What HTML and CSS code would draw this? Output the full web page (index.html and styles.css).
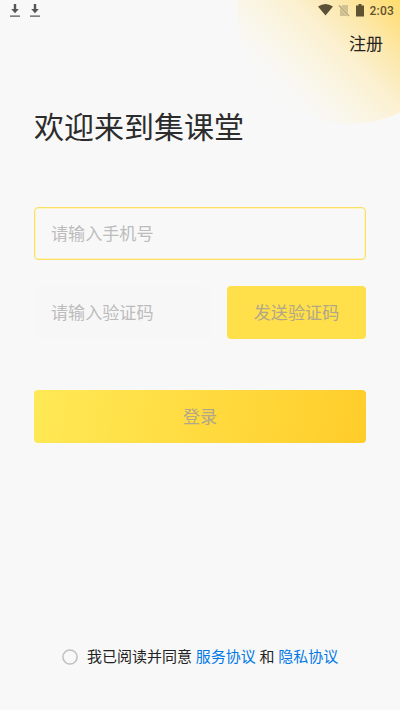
FILE: index.html
```html
<!DOCTYPE html>
<html lang="zh-CN">
<head>
<meta charset="utf-8">
<title>登录</title>
<link rel="stylesheet" href="styles.css">
</head>
<body>
<div class="screen">
  <div class="glow"></div>
  <header class="status">
    <svg class="download" viewBox="0 0 10 14"><path d="M3.8 0h2.4v5h2.6L5 9.3 1.2 5h2.6zM0 11.5h10v1.3H0z"/></svg>
    <svg class="download" viewBox="0 0 10 14"><path d="M3.8 0h2.4v5h2.6L5 9.3 1.2 5h2.6zM0 11.5h10v1.3H0z"/></svg>
    <div class="system">
      <svg class="wifi" viewBox="0 0 15 12"><path d="M0 2.600Q7.500-2.400 15 2.600L7.500 11.600z"/></svg>
      <svg class="sim" viewBox="0 0 12 13"><path d="M4.500 1H10v8.500L3.300 2.600zM2 4l7.500 8H2z"/><path class="slash" d="M1 1.500L11 12"/></svg>
      <svg class="battery" viewBox="0 0 8 13"><path d="M2.500 0h3v1.500H8V12.500H0V1.500h2.500z"/></svg>
      <span class="time">2:03</span>
    </div>
  </header>
  <nav class="nav"><a class="register">注册</a></nav>
  <h1 class="title">欢迎来到集课堂</h1>
  <form class="form">
    <div class="field active">请输入手机号</div>
    <div class="row">
      <div class="field code">请输入验证码</div>
      <div class="send">发送验证码</div>
    </div>
    <div class="login">登录</div>
  </form>
  <footer class="agreement">
    <svg class="radio" viewBox="0 0 16 16"><circle cx="8" cy="8" r="7.100"/></svg>
    <span>我已阅读并同意 <a>服务协议</a> 和 <a>隐私协议</a></span>
  </footer>
</div>
</body>
</html>
```
FILE: styles.css
```css
* { box-sizing: border-box; }
body {
  margin: 0;
  background: #f8f8f8;
  font-family: Roboto, "Noto Sans CJK SC", sans-serif;
  color: #222;
}
.screen {
  position: relative;
  width: 400px;
  height: 710px;
  overflow: hidden;
  display: flex;
  flex-direction: column;
}
.glow {
  position: absolute;
  left: 237px;
  top: -102px;
  width: 226px;
  height: 226px;
  border-radius: 50%;
  background: linear-gradient(225deg, #ffd94f 30%, #ffe085 42%, #fce8ab 50%, #fbf0cf 60%, #faf5e4 70%, #f8f8f7 82%);
}
.status {
  position: relative;
  height: 20px;
  padding: 0 6px 0 10px;
  display: flex;
  align-items: center;
  gap: 10px;
}
.status svg { display: block; fill: #555; }
.download { width: 10px; height: 14px; margin-top: 1px; }
.system { margin-left: auto; display: flex; align-items: center; }
.system .wifi { width: 15px; height: 12px; fill: #5b5137; }
.system .sim { width: 12px; height: 13px; margin-left: 5px; fill: #d0c193; }
.slash { stroke: #b3a47a; stroke-width: 1.2; }
.system .battery { width: 8px; height: 13px; margin-left: 6px; fill: #5f5230; }
.time {
  margin: 1px 0 0 6px;
  font-size: 12px;
  font-weight: 500;
  line-height: 20px;
  letter-spacing: .2px;
  color: #5f5230;
}
.nav {
  position: relative;
  height: 48px;
  padding-right: 17px;
  display: flex;
  align-items: center;
  justify-content: flex-end;
}
.register { font-size: 17px; line-height: 24px; }
.title {
  position: relative;
  margin: 38px 0 0 34px;
  font-size: 30px;
  font-weight: 400;
  line-height: 44px;
  color: #2c2c2c;
}
.form {
  margin: 57px 34px 0;
  display: flex;
  flex-direction: column;
}
.field {
  height: 53px;
  padding: 0 17px 2px;
  display: flex;
  align-items: center;
  border-radius: 4px;
  font-size: 17.1px;
  color: #bcbcbc;
}
.active { padding: 0 16px 2px; border: 1px solid #fbe065; box-shadow: inset 0 0 0 1px #fdf3c4; }
.row { display: flex; gap: 17px; margin-top: 26px; }
.code { width: 176px; padding-bottom: 3px; background: #f7f7f7; }
.send, .login {
  height: 53px;
  display: flex;
  align-items: center;
  justify-content: center;
  border-radius: 4px;
  font-size: 17.1px;
  color: #b2a788;
  padding-bottom: 2px;
}
.send { flex: 1; background: #ffe04a; }
.login { margin-top: 51px; background: linear-gradient(100deg, #ffe956, #ffcd2a); }
.agreement {
  margin: auto 0 42px;
  padding-left: 62px;
  display: flex;
  align-items: center;
  gap: 9px;
  font-size: 15px;
  line-height: 22px;
  white-space: nowrap;
}
.agreement a { color: #0079e6; }
.radio { width: 16px; height: 16px; fill: none; stroke: #c0c0c0; stroke-width: 1.5; }
```
